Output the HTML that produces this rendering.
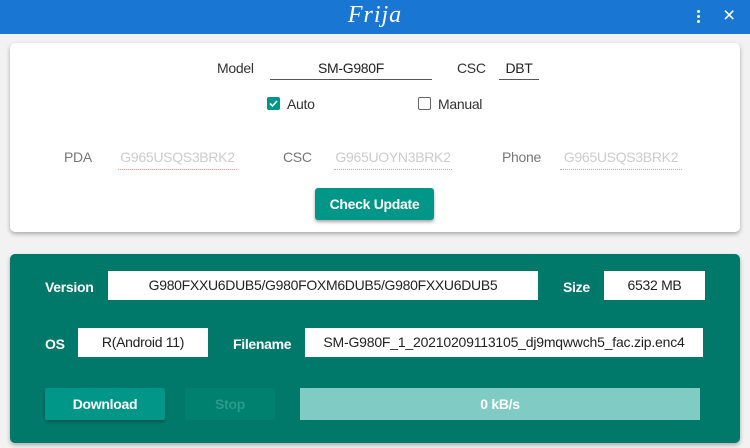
<!DOCTYPE html>
<html><head><style>
*{margin:0;padding:0;box-sizing:border-box}
body{width:750px;height:448px;background:#f2f2f2;font-family:"Liberation Sans",sans-serif;font-size:14px;position:relative;overflow:hidden;letter-spacing:-0.3px}
.a{position:absolute}
.bar{left:0;top:0;width:750px;height:34px;background:#1976d2}
.card{left:10px;top:43px;width:730px;height:189px;background:#fff;border-radius:5px;box-shadow:0 2px 4px rgba(0,0,0,.3)}
.card2{left:10px;top:254px;width:730px;height:189px;background:#00796b;border-radius:5px;box-shadow:0 2px 4px rgba(0,0,0,.3)}
.lbl{color:#333}
.ph{color:#ccc}
.dot{border-bottom:1px dotted #e99}
.wl{color:#fff;font-weight:bold}
.box{background:#fff;color:#222;text-align:center;line-height:29px;height:29px}
.cb{width:13px;height:13px;border-radius:2px}
</style></head><body>
<div class="a bar"></div>
<div class="a" style="left:0;top:2px;width:750px;text-align:center;color:#fff;font-family:'Liberation Serif',serif;font-style:italic;font-size:24px;letter-spacing:1px">Frija</div>
<div class="a" style="left:697px;top:10px;width:3px;height:3px;background:#fff;border-radius:2px;box-shadow:0 5px 0 #fff,0 10px 0 #fff"></div>
<div class="a" style="left:723px;top:4px;color:#fff;font-size:21px">×</div>

<div class="a card"></div>
<div class="a lbl" style="left:217px;top:60px">Model</div>
<div class="a" style="left:270px;top:60px;width:162px;height:20px;border-bottom:1px solid #555;text-align:center;color:#222">SM-G980F</div>
<div class="a lbl" style="left:457px;top:60px">CSC</div>
<div class="a" style="left:499px;top:60px;width:40px;height:20px;border-bottom:1px solid #555;text-align:center;color:#222">DBT</div>
<div class="a cb" style="left:267px;top:97px;background:#009688"><svg width="13" height="13" style="display:block"><path d="M3 6.5l2.5 2.5 4.5-5" stroke="#fff" stroke-width="1.6" fill="none"/></svg></div>
<div class="a lbl" style="left:287px;top:96px">Auto</div>
<div class="a cb" style="left:418px;top:97px;border:1.5px solid #666"></div>
<div class="a lbl" style="left:438px;top:96px">Manual</div>

<div class="a" style="left:64px;top:149px;color:#777">PDA</div>
<div class="a ph dot" style="left:118px;top:149px;width:119px;height:21px;text-align:center">G965USQS3BRK2</div>
<div class="a" style="left:283px;top:149px;color:#777">CSC</div>
<div class="a ph dot" style="left:334px;top:149px;width:118px;height:21px;text-align:center">G965UOYN3BRK2</div>
<div class="a" style="left:502px;top:149px;color:#777">Phone</div>
<div class="a ph dot" style="left:560px;top:149px;width:122px;height:21px;text-align:center">G965USQS3BRK2</div>
<div class="a" style="left:315px;top:188px;width:119px;height:32px;background:#009688;color:#fff;font-weight:bold;text-align:center;line-height:32px;border-radius:3px;box-shadow:0 2px 3px rgba(0,0,0,.35)">Check Update</div>

<div class="a card2"></div>
<div class="a wl" style="left:45px;top:279px">Version</div>
<div class="a box" style="left:108px;top:271px;width:430px">G980FXXU6DUB5/G980FOXM6DUB5/G980FXXU6DUB5</div>
<div class="a wl" style="left:563px;top:279px">Size</div>
<div class="a box" style="left:604px;top:271px;width:101px">6532 MB</div>
<div class="a wl" style="left:45px;top:336px">OS</div>
<div class="a box" style="left:78px;top:328px;width:130px">R(Android 11)</div>
<div class="a wl" style="left:233px;top:336px">Filename</div>
<div class="a box" style="left:305px;top:328px;width:398px;letter-spacing:-0.2px">SM-G980F_1_20210209113105_dj9mqwwch5_fac.zip.enc4</div>
<div class="a" style="left:45px;top:388px;width:120px;height:32px;background:#009688;color:#fff;font-weight:bold;text-align:center;line-height:32px;border-radius:2px;box-shadow:0 2px 3px rgba(0,0,0,.3)">Download</div>
<div class="a" style="left:185px;top:388px;width:90px;height:32px;background:#00806f;color:#2a9a8a;font-weight:bold;text-align:center;line-height:32px;border-radius:2px">Stop</div>
<div class="a" style="left:300px;top:388px;width:400px;height:32px;background:#80cbc4;color:#fff;font-weight:bold;text-align:center;line-height:32px">0 kB/s</div>
</body></html>
